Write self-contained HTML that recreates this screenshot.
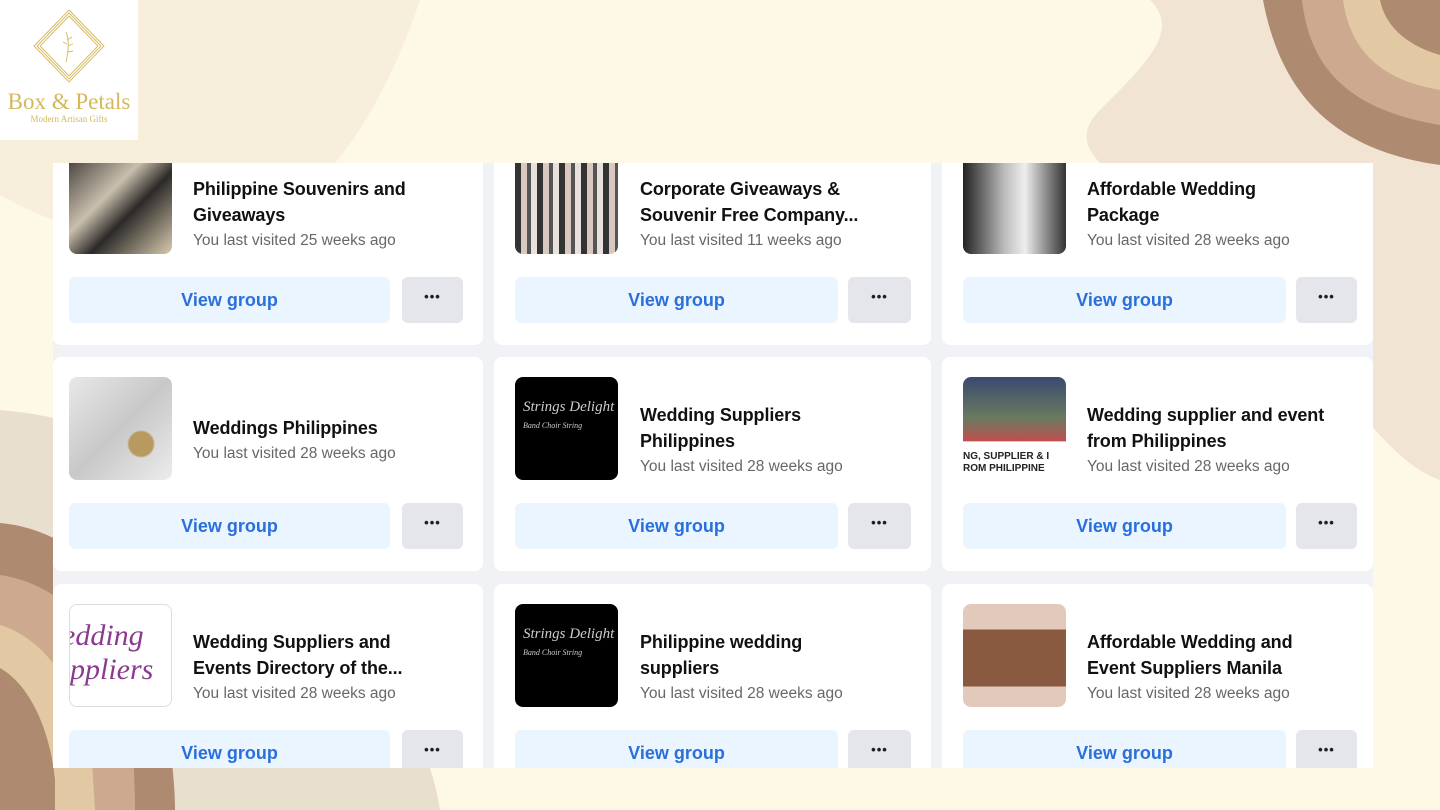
<!DOCTYPE html>
<html><head><meta charset="utf-8">
<style>
*{margin:0;padding:0;box-sizing:border-box}
body{width:1440px;height:810px;overflow:hidden;background:#fef9e7;position:relative;font-family:"Liberation Sans",sans-serif}
svg.bg{position:absolute;left:0;top:0}
.logo{position:absolute;left:0;top:0;width:138px;height:140px;background:#fff}
.panel{position:absolute;left:53px;top:163px;width:1320px;height:605px;background:#f0f2f5;overflow:hidden}
.card{position:absolute;background:#fff;border-radius:8px;height:214px}
.img{position:absolute;left:16px;top:20px;width:103px;height:103px;border-radius:8px;overflow:hidden}
.tx{position:absolute;left:140px;top:0;height:143px;width:280px;display:flex;flex-direction:column;justify-content:center;padding-top:22px;white-space:nowrap}
.t{font-weight:bold;font-size:18px;line-height:26px;color:#111;letter-spacing:-0.1px}
.s{font-size:15.5px;line-height:22px;color:#65676b;margin-top:2px}
.btn{position:absolute;left:16px;top:146px;width:321px;height:46px;background:#ebf5ff;border-radius:6px;color:#2a6fdb;font-weight:bold;font-size:18px;text-align:center;line-height:46px}
.dot{position:absolute;left:349px;top:146px;width:61px;height:46px;background:#e4e6eb;border-radius:6px;text-align:center;line-height:40px;font-weight:bold;color:#1c1e21;font-size:13px;letter-spacing:1px}
.c2 .img,.c2 .btn{left:21px}.c2 .tx{left:146px}.c2 .btn{width:323px}.c2 .dot{left:354px;width:63px}
.c3 .img,.c3 .btn{left:21px}.c3 .tx{left:145px}.c3 .btn{width:323px}.c3 .dot{left:354px;width:61px}
</style></head><body>
<svg class="bg" width="1440" height="810">
<path d="M0 0 H420 C380 120 320 200 250 230 C160 260 60 230 0 195 Z" fill="#f7efdb"/>
<path d="M1150 0 H1440 V480 C1380 460 1330 360 1230 260 C1150 190 1050 160 1100 110 C1150 60 1180 30 1150 0Z" fill="#f2e4d2"/>
<path d="M1263 0 H1440 V165 C1330 150 1280 90 1263 0Z" fill="#ae8a70"/>
<path d="M1302 0 H1440 V125 C1350 110 1310 70 1302 0Z" fill="#cca98f"/>
<path d="M1343 0 H1440 V90 C1380 80 1350 50 1343 0Z" fill="#e2c9a3"/>
<path d="M1380 0 H1440 V55 C1405 45 1385 25 1380 0Z" fill="#ae8a70"/>
<path d="M0 410 C120 420 230 480 300 560 C380 650 430 740 440 810 H0Z" fill="#e8dfcf"/>
<path d="M0 523 C80 530 140 600 160 680 C170 740 175 780 175 810 H0Z" fill="#ae8a70"/>
<path d="M0 575 C70 585 120 650 130 720 C134 760 135 790 135 810 H0Z" fill="#cca98f"/>
<path d="M0 625 C50 640 85 700 92 760 L95 810 H0Z" fill="#e2c9a3"/>
<path d="M0 668 C30 685 50 730 55 780 L55 810 H0Z" fill="#ae8a70"/>
</svg>
<div class="logo">
<svg width="138" height="140" style="position:absolute;left:0;top:0">
<g fill="none" stroke="#d4b85a" stroke-width="0.9">
<path d="M69 10 L104 46 L69 82 L34 46Z"/><path d="M69 13 L101 46 L69 79 L37 46Z"/><path d="M69 16 L98 46 L69 76 L40 46Z"/>
<path d="M66 62 C68 52 70 42 66 32"/><path d="M67 40 l5 -3 M68 46 l5 -2 M67 44 l-4 -2 M68 52 l5 -1"/>
</g>
<text x="69" y="109" text-anchor="middle" font-family="Liberation Serif,serif" font-size="23" fill="#d4b85a">Box &amp; Petals</text>
<text x="69" y="122" text-anchor="middle" font-family="Liberation Serif,serif" font-size="9" fill="#d4b85a">Modern Artisan Gifts</text>
</svg>
</div>
<div class="panel">
<div class="card" style="left:0;top:-32px;width:430px"><div class="img" style="background:linear-gradient(135deg,#3a3530,#c9bfae 40%,#2c2a28 60%,#d8cbb0)"></div><div class="tx"><div class="t">Philippine Souvenirs and<br>Giveaways</div><div class="s">You last visited 25 weeks ago</div></div><div class="btn">View group</div><div class="dot">•••</div></div>
<div class="card c2" style="left:441px;top:-32px;width:437px"><div class="img" style="background:repeating-linear-gradient(90deg,#333 0 6px,#d9c8c0 6px 12px,#555 12px 16px,#e8e0dc 16px 22px)"></div><div class="tx"><div class="t">Corporate Giveaways &amp;<br>Souvenir Free Company...</div><div class="s">You last visited 11 weeks ago</div></div><div class="btn">View group</div><div class="dot">•••</div></div>
<div class="card c3" style="left:889px;top:-32px;width:431px"><div class="img" style="background:linear-gradient(90deg,#222,#bbb 40%,#eee 60%,#333)"></div><div class="tx"><div class="t">Affordable Wedding<br>Package</div><div class="s">You last visited 28 weeks ago</div></div><div class="btn">View group</div><div class="dot">•••</div></div>

<div class="card" style="left:0;top:194px;width:430px"><div class="img" style="background:radial-gradient(circle at 70% 65%,#b89a60 0 12px,transparent 14px),linear-gradient(135deg,#e8e8e8,#c8c8c8 50%,#ececec)"></div><div class="tx"><div class="t">Weddings Philippines</div><div class="s">You last visited 28 weeks ago</div></div><div class="btn">View group</div><div class="dot">•••</div></div>
<div class="card c2" style="left:441px;top:194px;width:437px"><div class="img" style="background:#000;color:#ccc;font-family:'Liberation Serif',serif;font-style:italic;font-size:15px;padding:22px 0 0 8px;white-space:nowrap">Strings Delight Ense<br><span style="font-size:8px">Band Choir String</span></div><div class="tx"><div class="t">Wedding Suppliers<br>Philippines</div><div class="s">You last visited 28 weeks ago</div></div><div class="btn">View group</div><div class="dot">•••</div></div>
<div class="card c3" style="left:889px;top:194px;width:431px"><div class="img" style="background:linear-gradient(180deg,#3a4a70,#6a7a60 40%,#c05050 62%,#fff 63%)"><div style="position:absolute;top:74px;left:0;font-size:10px;font-weight:bold;color:#222;white-space:nowrap;line-height:12px">NG, SUPPLIER &amp; I<br>ROM PHILIPPINE</div></div><div class="tx"><div class="t">Wedding supplier and event<br>from Philippines</div><div class="s">You last visited 28 weeks ago</div></div><div class="btn">View group</div><div class="dot">•••</div></div>

<div class="card" style="left:0;top:421px;width:430px"><div class="img" style="background:#fff;border:1px solid #ddd;color:#8a3a90;font-family:'Liberation Serif',serif;font-style:italic;font-size:30px;line-height:34px;padding-top:14px;white-space:nowrap;text-indent:-8px">edding<br>ppliers</div><div class="tx"><div class="t">Wedding Suppliers and<br>Events Directory of the...</div><div class="s">You last visited 28 weeks ago</div></div><div class="btn">View group</div><div class="dot">•••</div></div>
<div class="card c2" style="left:441px;top:421px;width:437px"><div class="img" style="background:#000;color:#ccc;font-family:'Liberation Serif',serif;font-style:italic;font-size:15px;padding:22px 0 0 8px;white-space:nowrap">Strings Delight Ense<br><span style="font-size:8px">Band Choir String</span></div><div class="tx"><div class="t">Philippine wedding<br>suppliers</div><div class="s">You last visited 28 weeks ago</div></div><div class="btn">View group</div><div class="dot">•••</div></div>
<div class="card c3" style="left:889px;top:421px;width:431px"><div class="img" style="background:linear-gradient(180deg,#e3c8bc 0 25%,#8a5a40 25% 80%,#e3c8bc 80%)"></div><div class="tx"><div class="t">Affordable Wedding and<br>Event Suppliers Manila</div><div class="s">You last visited 28 weeks ago</div></div><div class="btn">View group</div><div class="dot">•••</div></div>
</div>
</body></html>
